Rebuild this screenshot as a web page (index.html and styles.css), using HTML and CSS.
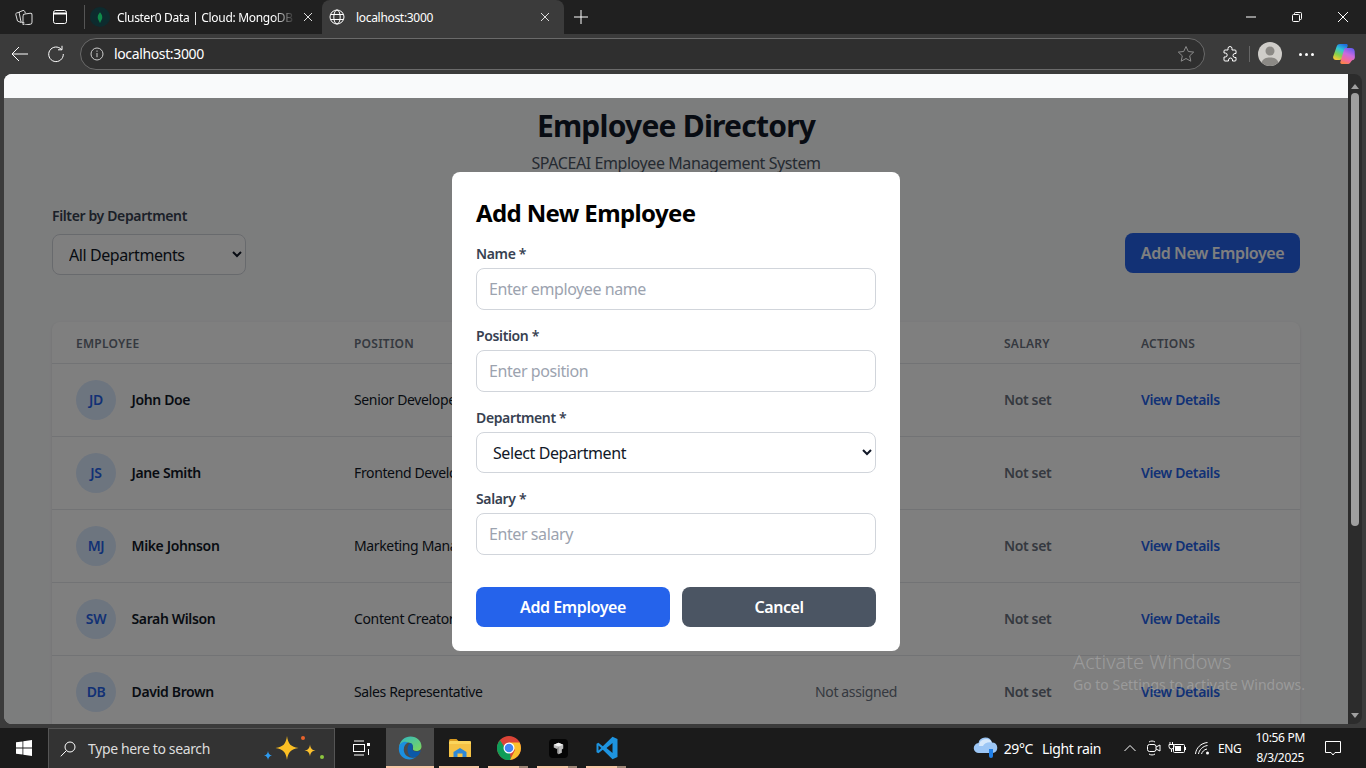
FILE: index.html
```html
<!DOCTYPE html>
<html>
<head>
    <meta charset="UTF-8">
    <title>localhost:3000</title>
    <link rel="stylesheet" href="styles.css">
</head>
<body>
    <!-- tab strip -->
    <div class="tabstrip">
        <div class="strip-btns">
            <svg class="ico stack" width="18" height="16" viewBox="0 0 18 16"><path d="M6 13.500L2.500 12 .8 5.500c-.2-.8.1-1.300.8-1.500L5 3"/><path d="M9.500 14L6 13 4.300 4.200c-.2-.8.100-1.300.8-1.500L8 1.500c.8-.2 1.300 0 1.600.7l.8 2"/><rect x="8" y="4.500" width="9" height="11" rx="1.800" transform="skewY(-8) translate(0 2)"/></svg>
            <svg class="ico" width="16" height="16" viewBox="0 0 16 16"><rect x="1.500" y="1.500" width="13" height="13" rx="2"/><path d="M1.500 4.500h13" stroke-width="2"/></svg>
        </div>
        <div class="strip-sep"></div>
        <div class="tab">
            <span class="leaf-bg"><svg width="6" height="13" viewBox="0 0 8 14"><path d="M4 0C6.800 3 7.500 6 6.800 8.500 6.200 10.500 4.800 11.500 4.300 14H3.700C3.200 11.500 1.800 10.500 1.200 8.500.5 6 1.200 3 4 0z" fill="#0f8a4a"/></svg></span>
            <span class="tab-title fade">Cluster0 Data | Cloud: MongoDB Cloud</span>
            <svg class="ico tab-x" width="10" height="10" viewBox="0 0 10 10"><path d="M1 1l8 8M9 1l-8 8"/></svg>
        </div>
        <div class="tab active">
            <svg class="ico" width="16" height="16" viewBox="0 0 16 16"><circle cx="8" cy="8" r="7"/><ellipse cx="8" cy="8" rx="3.200" ry="7"/><path d="M1.500 5.500h13M1.500 10.500h13"/></svg>
            <span class="tab-title">localhost:3000</span>
            <svg class="ico tab-x" width="10" height="10" viewBox="0 0 10 10"><path d="M1 1l8 8M9 1l-8 8"/></svg>
        </div>
        <svg class="ico new-tab" width="14" height="14" viewBox="0 0 14 14"><path d="M7 0v14M0 7h14"/></svg>
        <div class="win-btns">
            <svg class="ico" width="10" height="10" viewBox="0 0 10 10"><path d="M0 5h10"/></svg>
            <svg class="ico" width="10" height="10" viewBox="0 0 10 10"><rect x=".5" y="2.500" width="7" height="7" rx="1"/><path d="M2.500 2.500V1.500a1 1 0 0 1 1-1h5a1 1 0 0 1 1 1v5a1 1 0 0 1-1 1H7.500"/></svg>
            <svg class="ico" width="10" height="10" viewBox="0 0 10 10"><path d="M0 0l10 10M10 0L0 10"/></svg>
        </div>
    </div>

    <!-- address bar -->
    <div class="toolbar">
        <svg class="ico back" width="18" height="16" viewBox="0 0 18 16"><path d="M17 8H1M8 1L1 8l7 7"/></svg>
        <svg class="ico reload" width="18" height="18" viewBox="0 0 18 18"><path d="M14.500 4.500A7.300 7.300 0 1 0 16.300 9M15 .8v4h-4"/></svg>
        <div class="addressbar">
            <svg class="ico info" width="14" height="14" viewBox="0 0 14 14"><circle cx="7" cy="7" r="6"/><path d="M7 6v4.200M7 3.500v1.300"/></svg>
            <span class="url">localhost:3000</span>
            <svg class="ico star" width="18" height="18" viewBox="0 0 18 18"><path d="M9 1.500l2.300 5 5.400.6-4 3.700 1.100 5.400L9 13.500l-4.800 2.700 1.100-5.400-4-3.700 5.400-.6z"/></svg>
        </div>
        <svg class="ico puzzle" width="16" height="16" viewBox="0 0 16 16"><path d="M6 2.500a2 2 0 0 1 4 0V4h3a1 1 0 0 1 1 1v2.500h-1a2 2 0 0 0 0 4h1V14a1 1 0 0 1-1 1h-2.500v-1a2 2 0 0 0-4 0v1H3a1 1 0 0 1-1-1v-3h1.200a2 2 0 0 0 0-4H2V5a1 1 0 0 1 1-1h3z"/></svg>
        <div class="tool-sep"></div>
        <svg class="profile" width="24" height="24" viewBox="0 0 24 24"><circle cx="12" cy="12" r="12" fill="#cfcdc9"/><circle cx="12" cy="9" r="4.500" fill="#8b8985"/><path d="M3.500 20.500C5 16.500 8 15.500 12 15.500s7 1 8.500 5a12 12 0 0 1-17 0z" fill="#8b8985"/></svg>
        <div class="dots"><i></i><i></i><i></i></div>
        <svg class="copilot" width="22" height="20" viewBox="0 0 22 20">
            <defs>
                <linearGradient id="cpa" x1="0.700" y1="0" x2="0.300" y2="1"><stop offset="0" stop-color="#1f6fe0"/><stop offset=".35" stop-color="#2fc6d8"/><stop offset=".7" stop-color="#86d04a"/><stop offset="1" stop-color="#f5c93a"/></linearGradient>
                <linearGradient id="cpb" x1="0.700" y1="0" x2="0.300" y2="1"><stop offset="0" stop-color="#6a5cf0"/><stop offset=".4" stop-color="#c86ae0"/><stop offset=".75" stop-color="#f36a9a"/><stop offset="1" stop-color="#f9834a"/></linearGradient>
            </defs>
            <path d="M7 0h6c1.500 0 2 1 1.600 2.200L10.500 13c-.8 2-2 3-4 3H3c-2 0-3.300-1.500-2.800-3.500L3.500 3C4 1 5 0 7 0z" fill="url(#cpa)"/>
            <path d="M12.500 4H18c2 0 3.300 1.200 3.700 3.200l.2 5.800c0 2-1 3-2.700 3.200l-1.500 1.800C17 19.500 16 20 14.500 20H9c-1.500 0-2-1-1.600-2.200L11 6c.3-1.200.6-2 1.500-2z" fill="url(#cpb)"/>
        </svg>
    </div>

    <!-- page viewport -->
    <div class="viewport">
        <div class="page">
            <div class="top-strip"></div>
            <main class="content">
                <header class="page-head">
                    <h1>Employee Directory</h1>
                    <p>SPACEAI Employee Management System</p>
                </header>
                <div class="filter-row">
                    <div class="filter">
                        <label class="filter-label">Filter by Department</label>
                        <select class="filter-select"><option>All Departments</option></select>
                    </div>
                    <button class="btn-add">Add New Employee</button>
                </div>
                <div class="table-card">
                    <table class="emp-table">
                        <thead>
                            <tr><th class="col-emp">Employee</th><th class="col-pos">Position</th><th class="col-dept">Department</th><th class="col-sal">Salary</th><th class="col-act">Actions</th></tr>
                        </thead>
                        <tbody>
                            <tr><td><div class="who"><span class="avatar">JD</span><span class="name">John Doe</span></div></td><td>Senior Developer</td><td class="muted">Not assigned</td><td class="notset">Not set</td><td class="link">View Details</td></tr>
                            <tr><td><div class="who"><span class="avatar">JS</span><span class="name">Jane Smith</span></div></td><td>Frontend Developer</td><td class="muted">Not assigned</td><td class="notset">Not set</td><td class="link">View Details</td></tr>
                            <tr><td><div class="who"><span class="avatar">MJ</span><span class="name">Mike Johnson</span></div></td><td>Marketing Manager</td><td class="muted">Not assigned</td><td class="notset">Not set</td><td class="link">View Details</td></tr>
                            <tr><td><div class="who"><span class="avatar">SW</span><span class="name">Sarah Wilson</span></div></td><td>Content Creator</td><td class="muted">Not assigned</td><td class="notset">Not set</td><td class="link">View Details</td></tr>
                            <tr><td><div class="who"><span class="avatar">DB</span><span class="name">David Brown</span></div></td><td>Sales Representative</td><td class="muted">Not assigned</td><td class="notset">Not set</td><td class="link">View Details</td></tr>
                        </tbody>
                    </table>
                </div>
            </main>

            <div class="overlay">
                <form class="modal">
                    <h2>Add New Employee</h2>
                    <div class="field">
                        <label>Name *</label>
                        <input type="text" placeholder="Enter employee name">
                    </div>
                    <div class="field">
                        <label>Position *</label>
                        <input type="text" placeholder="Enter position">
                    </div>
                    <div class="field">
                        <label>Department *</label>
                        <select><option>Select Department</option></select>
                    </div>
                    <div class="field">
                        <label>Salary *</label>
                        <input type="text" placeholder="Enter salary">
                    </div>
                    <div class="modal-btns">
                        <button type="button" class="btn-primary">Add Employee</button>
                        <button type="button" class="btn-cancel">Cancel</button>
                    </div>
                </form>
            </div>

            <div class="watermark">
                <div class="wm-big">Activate Windows</div>
                <div class="wm-small">Go to Settings to activate Windows.</div>
            </div>
        </div>
        <div class="scrollbar">
            <span class="arrow-up"></span>
            <span class="thumb"></span>
            <span class="arrow-down"></span>
        </div>
    </div>

    <!-- windows taskbar -->
    <div class="taskbar">
        <svg class="start" width="16" height="16" viewBox="0 0 16 16"><path d="M0 2.300l6.500-.9v6.200H0zM7.300 1.300L16 0v7.600H7.300zM0 8.400h6.500v6.200L0 13.700zM7.300 8.400H16V16l-8.700-1.300z" fill="#fff"/></svg>
        <div class="search">
            <svg class="ico" width="16" height="16" viewBox="0 0 16 16"><circle cx="10" cy="6" r="5"/><path d="M6.400 9.600L.8 15.300"/></svg>
            <span class="search-text">Type here to search</span>
            <svg class="sparkles" width="62" height="36" viewBox="0 0 62 36">
                <path d="M24 6c1 8 4 11 11.500 12C28 19 25 22 24 30c-1-8-4-11-11.500-12C20 17 23 14 24 6z" fill="#fbbf24"/>
                <path d="M47 14.500c.5 4 2 5.500 5.500 6-3.500.5-5 2-5.500 6-.5-4-2-5.500-5.500-6 3.500-.5 5-2 5.500-6z" fill="#fbc02d"/>
                <path d="M5 21c.4 2.800 1.300 3.800 4 4.500-2.700.7-3.300 1.700-4 4.500-.4-2.800-1.300-3.800-4-4.500 2.700-.7 3.600-1.700 4-4.500z" fill="#2e9bf0"/>
                <circle cx="40" cy="8" r="2" fill="#e8622c"/>
                <circle cx="59" cy="27" r="2" fill="#8dc63f"/>
            </svg>
        </div>
        <svg class="ico taskview" width="18" height="16" viewBox="0 0 18 16"><path d="M2 1h10M2 15h10"/><rect x="1.500" y="4.500" width="11" height="7"/><rect x="15" y="3" width="3" height="3" fill="#fff" stroke="none"/><path d="M16.500 9v6"/></svg>
        <div class="apps">
            <div class="app current">
                <svg width="24" height="24" viewBox="0 0 24 24">
                    <defs><linearGradient id="edg" x1="0" y1="0" x2="1" y2="1"><stop offset="0" stop-color="#2fb7c4"/><stop offset="1" stop-color="#7fd858"/></linearGradient></defs>
                    <path d="M1 11C2 4.500 7 .5 12.500.5 19 .5 23.500 5 23.500 10.500c0 3-2.500 4.500-5 4.500-2.500 0-4-1-3.500-2.500.5-1.500-.5-6-5-6-5 0-9 3-9 4.500z" fill="url(#edg)"/>
                    <path d="M1 11c.5-4 5-6.500 9-4.500-2.500 1-5 4.500-4 9 1 4.500 6 7.500 12 5.500-2 1.500-4 2.500-6.500 2.500C5 23.500-.2 18 1 11z" fill="#1b8fdf"/>
                    <path d="M9.500 13c0-3 1.500-5.500 3-5.800 1.800-.2 2.700 2.600 2.200 4.800-.6 2.500 1 3.500 3.800 3.500 2 0 3.500-.5 4.500-1.500-1 4-3.500 6.500-6.500 7.500C11 22 9.500 17 9.500 13z" fill="#0c59a8"/>
                </svg>
            </div>
            <div class="app">
                <svg width="22" height="18" viewBox="0 0 22 18"><path d="M0 1.500A1.500 1.500 0 0 1 1.500 0h6l2.500 2.500H0z" fill="#d99a1f"/><rect y="2" width="22" height="16" rx="1" fill="#fbd55c"/><rect y="5" width="22" height="13" fill="#f5c244"/><path d="M4.500 13l6.500-4 6.500 4v5h-4v-3.500h-5V18h-4z" fill="#2b88d8"/></svg>
            </div>
            <div class="app split">
                <svg width="24" height="24" viewBox="0 0 24 24"><circle cx="12" cy="12" r="12" fill="#db4437"/><path d="M12 12L1.600 18A12 12 0 0 1 3 4.200L8 12z" fill="#0f9d58"/><path d="M1.600 18L8 9l4 3 2 12A12 12 0 0 1 1.600 18z" fill="#0f9d58"/><path d="M12 6.500h10.600A12 12 0 0 1 13 24l5-10z" fill="#fbc02d"/><circle cx="12" cy="12" r="5.500" fill="#fff"/><circle cx="12" cy="12" r="4.300" fill="#4285f4"/></svg>
            </div>
            <div class="app split">
                <svg width="19" height="19" viewBox="0 0 20 20"><rect width="20" height="20" rx="4" fill="#050505"/><path d="M5 6l5-2 5 2v4l-1.500 1v3.500L10 16l-1.500-1.500V10.500L5 9z" fill="#bdbdbd"/><path d="M5 6l5 1.800L15 6l-5-2z" fill="#f2f2f2"/><path d="M10 7.800V16l-1.500-1.500v-4z" fill="#7c7c7c"/></svg>
            </div>
            <div class="app split">
                <svg width="24" height="24" viewBox="0 0 24 24"><path d="M17.500.8L7.800 10.200 3.400 6.800 1.500 7.800v8.400l1.900 1 4.400-3.400 9.700 9.400 5-2.200V3zM17.500 7v10l-6-5zM3.500 9.500L6.300 12l-2.800 2.500z" fill="#1e94e0" fill-rule="evenodd"/></svg>
            </div>
        </div>
        <div class="tray">
            <svg class="weather" width="26" height="24" viewBox="0 0 26 24"><path d="M6 17a5 5 0 0 1-.5-10A7 7 0 0 1 19 6.500 5.300 5.300 0 0 1 20 17z" fill="#9cc6f5"/><path d="M6 10a7 7 0 0 1 13-3.500c-4-1-8 1-9 3.500z" fill="#d6e8fb"/><path d="M16 13h4v7a2 2 0 0 1-4 0z" fill="#1f7fe8"/></svg>
            <span class="temp">29°C</span>
            <span class="cond">Light rain</span>
            <svg class="ico chev" width="12" height="8" viewBox="0 0 12 8"><path d="M.5 7L6 1.500 11.500 7"/></svg>
            <svg class="ico meet" width="14" height="16" viewBox="0 0 14 16"><rect x=".5" y="4.500" width="8.500" height="7" rx="2"/><path d="M9 7l4-2v6l-4-2M2 2c2-1.300 4-1.300 6 0M2 14c2 1.300 4 1.300 6 0"/></svg>
            <svg class="ico batt" width="18" height="14" viewBox="0 0 18 14"><rect x="5.500" y="3.500" width="11" height="8" rx="1"/><rect x="7" y="5" width="6" height="5" fill="#fff" stroke="none"/><path d="M17.500 6v3M2 1v2M4.500 1v2M1 3.500h5v2a2.500 2.500 0 0 1-5 0zM3.500 8v3"/></svg>
            <svg class="ico wifi" width="16" height="14" viewBox="0 0 16 14"><path d="M.5 13C1 7 6 2 12.500 1.500M3.500 13C4 9 8 5 12.500 4.500M6.500 13C7 11 9 8.500 12 8"/><circle cx="12.500" cy="12" r="1.500" fill="#fff" stroke="none"/></svg>
            <span class="lang">ENG</span>
            <div class="clock"><span>10:56 PM</span><span>8/3/2025</span></div>
            <svg class="ico notif" width="16" height="15" viewBox="0 0 16 15"><path d="M.5.500h15v11H10L8 14l-2-2.500H.5z"/></svg>
        </div>
    </div>
</body>
</html>
```

FILE: styles.css
```css
* {
    box-sizing: border-box;
    letter-spacing: -0.026em;
}
html, body {
    margin: 0;
    height: 768px;
    overflow: hidden;
}
body {
    font-family: "Noto Sans", "Open Sans", sans-serif;
    background-color: #3b3b3b;
    display: flex;
    flex-direction: column;
}
.ico {
    fill: none;
    stroke: #fff;
    stroke-width: 1;
    flex: none;
}
.stack {
    stroke: #ddd;
}

/* tab strip */
.tabstrip {
    height: 34px;
    background-color: #202020;
    display: flex;
    align-items: center;
    flex: none;
}
.strip-btns {
    display: flex;
    align-items: center;
    gap: 19px;
    padding-left: 15px;
    width: 84px;
}
.strip-sep {
    width: 1px;
    height: 24px;
    background-color: #555;
}
.tab {
    width: 237px;
    height: 34px;
    display: flex;
    align-items: center;
    padding: 0 9px 0 5px;
    color: #fff;
    font-size: 12px;
}
.tab.active {
    width: 242px;
    padding: 0 14px 0 7px;
    background-color: #3b3b3b;
    border-radius: 8px 8px 0 0;
}
.leaf-bg {
    width: 20px;
    height: 20px;
    border-radius: 50%;
    background-color: #0d2b2e;
    display: flex;
    align-items: center;
    justify-content: center;
    flex: none;
}
.tab-title {
    flex: 1;
    min-width: 0;
    margin-left: 11px;
    white-space: nowrap;
    overflow: hidden;
}
.tab .tab-title {
    margin-right: 8px;
}
.tab-title.fade {
    margin-left: 7px;
    mask-image: linear-gradient(to right, #000 88%, transparent);
}
.tab-x {
    stroke: #ddd;
}
.new-tab {
    margin-left: 10px;
}
.win-btns {
    margin-left: auto;
    display: flex;
    gap: 36px;
    padding-right: 18px;
    align-items: center;
}
.win-btns .ico {
    width: 10px;
}

/* toolbar */
.toolbar {
    height: 40px;
    background-color: #3b3b3b;
    display: flex;
    align-items: center;
    flex: none;
    padding-left: 11px;
}
.reload {
    margin-left: 18px;
}
.addressbar {
    width: 1125px;
    height: 32px;
    margin-left: 15px;
    border: 1px solid #6a6a6a;
    border-radius: 16px;
    background-color: #2f2f2f;
    display: flex;
    align-items: center;
    padding: 0 9px;
    flex: none;
}
.info {
    stroke: #ccc;
}
.url {
    margin: -2px 0 0 10px;
    color: #fff;
    font-size: 14px;
    flex: 1;
}
.star {
    stroke: #8c8c8c;
}
.puzzle {
    margin-left: 17px;
}
.tool-sep {
    width: 1px;
    height: 16px;
    background-color: #666;
    margin-left: 11px;
}
.profile {
    margin-left: 8px;
    flex: none;
}
.dots {
    display: flex;
    gap: 3px;
    margin-left: 17px;
}
.dots i {
    width: 3px;
    height: 3px;
    border-radius: 50%;
    background-color: #fff;
}
.copilot {
    margin-left: 19px;
    flex: none;
}

/* page */
.viewport {
    height: 650px;
    margin: 0 4px;
    display: flex;
    flex: none;
}
.page {
    width: 1344px;
    height: 650px;
    position: relative;
    overflow: hidden;
    background-color: #f9fafb;
    border-radius: 8px 0 0 8px;
}
.top-strip {
    height: 24px;
    background-color: #f9fafb;
}
.content {
    padding: 0 48px;
}
.page-head {
    text-align: center;
}
.page-head h1 {
    margin: 0;
    padding-top: 6px;
    font-size: 30px;
    line-height: 44px;
    font-weight: 700;
    color: #111827;
}
.page-head p {
    margin: 3px 0 0;
    font-size: 16px;
    line-height: 24px;
    color: #4b5563;
}
.filter-row {
    display: flex;
    justify-content: space-between;
    align-items: flex-end;
    margin-top: 31px;
}
.filter-label {
    display: block;
    font-size: 14px;
    line-height: 20px;
    font-weight: 600;
    color: #374151;
    margin-bottom: 8px;
}
.filter-select {
    display: block;
    width: 194px;
    height: 41px;
    padding: 0 10px 0 12px;
    font-family: inherit;
    font-size: 16px;
    color: #111827;
    background-color: #fff;
    border: 1px solid #d1d5db;
    border-radius: 8px;
}
.btn-add {
    width: 175px;
    height: 40px;
    margin-bottom: 2px;
    border: none;
    border-radius: 8px;
    background-color: #2563eb;
    color: #fff;
    font-family: inherit;
    font-size: 16px;
    font-weight: 600;
}
.table-card {
    margin-top: 47px;
    background-color: #fff;
    box-shadow: 0 1px 3px rgba(0,0,0,0.1);
    border-radius: 8px 8px 0 0;
}
.emp-table {
    width: 100%;
    border-collapse: collapse;
    table-layout: fixed;
    font-size: 14px;
}
.emp-table th {
    height: 41px;
    padding: 2px 24px 0;
    text-align: left;
    font-size: 12px;
    font-weight: 600;
    letter-spacing: 0.02em;
    text-transform: uppercase;
    color: #6b7280;
    border-bottom: 1px solid #e5e7eb;
}
.col-emp { width: 278px; }
.col-pos { width: 461px; }
.col-dept { width: 189px; }
.col-sal { width: 137px; }
.col-act { width: 183px; }
.emp-table td {
    height: 73px;
    padding: 0 24px;
    color: #111827;
    border-bottom: 1px solid #e5e7eb;
    white-space: nowrap;
}
.who {
    display: flex;
    align-items: center;
    gap: 15.5px;
}
.avatar {
    width: 40px;
    height: 40px;
    border-radius: 50%;
    background-color: #dbeafe;
    color: #2563eb;
    font-weight: 600;
    display: flex;
    align-items: center;
    justify-content: center;
}
.name {
    font-weight: 600;
}
.emp-table .muted {
    color: #6b7280;
}
.emp-table .notset {
    color: #6b7280;
    font-weight: 600;
}
.emp-table .link {
    color: #2563eb;
    font-weight: 600;
}

/* modal */
.overlay {
    position: absolute;
    left: 0;
    right: 0;
    top: 24px;
    bottom: 0;
    background-color: rgba(0,0,0,0.5);
    display: flex;
    align-items: center;
    justify-content: center;
}
.modal {
    width: 448px;
    height: 479px;
    padding: 24px;
    background-color: #fff;
    border-radius: 8px;
}
.modal h2 {
    margin: 0 0 14px;
    font-size: 24px;
    line-height: 34px;
    font-weight: 700;
    color: #000;
}
.field {
    margin-bottom: 16px;
}
.field label {
    display: block;
    font-size: 14px;
    line-height: 20px;
    font-weight: 600;
    color: #374151;
    margin-bottom: 4px;
}
.field input, .field select {
    display: block;
    width: 100%;
    height: 42px;
    padding: 0 12px;
    font-family: inherit;
    font-size: 16px;
    color: #111827;
    background-color: #fff;
    border: 1px solid #d1d5db;
    border-radius: 8px;
}
.field select {
    height: 41px;
    padding-top: 2px;
}
.field input::placeholder {
    color: #9ca3af;
}
.modal-btns {
    display: flex;
    gap: 12px;
    margin-top: 32px;
}
.modal-btns button {
    flex: 1;
    height: 40px;
    border: none;
    border-radius: 8px;
    color: #fff;
    font-family: inherit;
    font-size: 16px;
    font-weight: 600;
}
.btn-primary {
    background-color: #2563eb;
}
.btn-cancel {
    background-color: #4b5563;
}

/* activation watermark */
.watermark {
    position: absolute;
    left: 1069px;
    top: 575px;
    color: rgba(255,255,255,0.22);
    white-space: nowrap;
}
.wm-big {
    font-size: 20px;
    line-height: 26px;
    font-weight: 300;
    letter-spacing: 0;
}
.wm-small {
    font-size: 14px;
    line-height: 20px;
    letter-spacing: 0;
}

/* scrollbar */
.scrollbar {
    width: 14px;
    height: 650px;
    background-color: #2c2c2c;
    border-radius: 0 8px 8px 0;
    display: flex;
    flex-direction: column;
    align-items: center;
    padding: 10px 0 6px;
}
.arrow-up {
    border: 4px solid transparent;
    border-top: none;
    border-bottom: 5px solid #a0a0a0;
}
.thumb {
    width: 8px;
    height: 433px;
    margin-top: 4px;
    border-radius: 4px;
    background-color: #9f9f9f;
}
.arrow-down {
    margin-top: auto;
    border: 4px solid transparent;
    border-bottom: none;
    border-top: 5px solid #a0a0a0;
}

/* taskbar */
.taskbar {
    height: 40px;
    margin-top: 4px;
    background-color: #1b1b1b;
    display: flex;
    align-items: center;
    color: #fff;
    flex: none;
}
.start {
    margin-left: 16px;
    flex: none;
}
.search {
    width: 287px;
    height: 40px;
    margin-left: 16px;
    background-color: #333;
    border: 1px solid #555;
    border-bottom: none;
    display: flex;
    align-items: center;
    padding-left: 11px;
    flex: none;
    position: relative;
}
.search-text {
    margin-left: 12px;
    font-size: 14px;
    color: #ddd;
}
.sparkles {
    position: absolute;
    right: 9px;
    top: 1px;
}
.taskview {
    margin-left: 17px;
}
.apps {
    display: flex;
    margin-left: 16px;
    gap: 1px;
}
.app {
    width: 48px;
    height: 40px;
    display: flex;
    align-items: center;
    justify-content: center;
    position: relative;
}
.app + .app {
    padding-left: 2px;
}
.app::after {
    content: "";
    position: absolute;
    left: 4px;
    right: 4px;
    bottom: 0;
    height: 2px;
    background-color: #f7c7a6;
}
.app.split::after {
    background: linear-gradient(to right, #f7c7a6 77%, #a08878 77%);
}
.app.current {
    background-color: #4a4a4a;
}
.app.current::after {
    left: 0;
    right: 0;
}
.tray {
    margin-left: auto;
    display: flex;
    align-items: center;
    height: 40px;
    font-size: 14px;
}
.temp {
    margin-left: 5px;
}
.cond {
    margin-left: 9px;
}
.chev {
    margin-left: 23px;
}
.meet {
    margin-left: 11px;
}
.batt {
    margin-left: 7px;
}
.wifi {
    margin-left: 9px;
}
.lang {
    margin-left: 7px;
    font-size: 12px;
}
.clock {
    margin-left: 14px;
    display: flex;
    flex-direction: column;
    align-items: center;
    font-size: 12px;
    line-height: 20px;
}
.notif {
    margin: 0 25px 0 20px;
}
```
